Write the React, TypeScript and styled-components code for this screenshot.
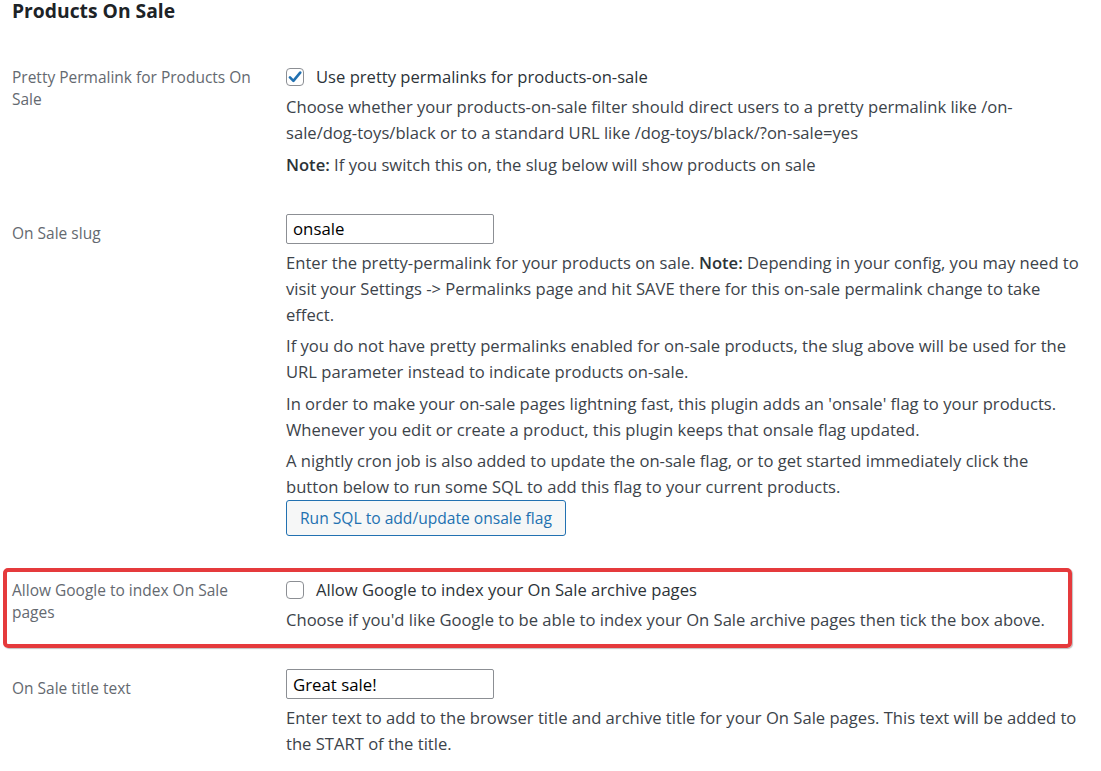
import React from "react";
import styled, { createGlobalStyle } from "styled-components";

const Global = createGlobalStyle`
  html, body { margin: 0; padding: 0; background: #ffffff; }
  body { font-family: "Open Sans", "Noto Sans", Arial, sans-serif; color: #3c434a; }
  * { box-sizing: border-box; }
`;

const Page = styled.div`
  padding: 0 16px 0 12px;
  width: 1101px;
  overflow: hidden;
`;

const Heading = styled.h2`
  margin: 0;
  font-size: 19.3px;
  line-height: 22px;
  font-weight: 700;
  color: #1d2327;
`;

const Row = styled.div<{ $pt: number; $pb: number; $highlight?: boolean; $mt?: number }>`
  display: grid;
  grid-template-columns: 274px 1fr;
  padding-top: ${(p) => p.$pt}px;
  padding-bottom: ${(p) => p.$pb}px;
  margin-top: ${(p) => p.$mt ?? 0}px;
  ${(p) =>
    p.$highlight
      ? `
    border: 4px solid #e53a3c;
    border-radius: 5px;
    margin-left: -9px;
    margin-right: 13px;
    padding-left: 5px;
    box-shadow: 1px 1px 1px rgba(0,0,0,0.25);
  `
      : ""}
`;

const Label = styled.div<{ $pt: number }>`
  padding-top: ${(p) => p.$pt}px;
  font-size: 15.5px;
  line-height: 22px;
  color: #646970;
  padding-right: 16px;
`;

const Field = styled.div`
  display: flex;
  flex-direction: column;
  align-items: flex-start;
`;

const CheckLine = styled.label`
  display: flex;
  align-items: center;
  gap: 12px;
  font-size: 16.6px;
  line-height: 26px;
  color: #2c3338;
`;

const Box = styled.span`
  width: 18px;
  height: 18px;
  border: 1px solid #8c8f94;
  border-radius: 4px;
  background: #fff;
  display: inline-flex;
  align-items: center;
  justify-content: center;
  flex: none;
`;

const Desc = styled.p<{ $mt?: number }>`
  margin: ${(p) => p.$mt ?? 5.5}px 0 0 0;
  font-size: 16.6px;
  line-height: 26px;
  color: #3c434a;
  white-space: nowrap;
  strong { font-weight: 600; color: #2c3338; }
`;

const TextInput = styled.div`
  width: 208px;
  height: 30px;
  border: 1px solid #8c8f94;
  border-radius: 2px;
  padding: 0 6px;
  display: flex;
  align-items: center;
  font-size: 16.8px;
  color: #000;
`;

const Button = styled.button`
  margin-top: 0;
  height: 36px;
  padding: 0 13px;
  border: 1px solid #2271b1;
  border-radius: 3px;
  background: #f6f7f7;
  color: #2271b1;
  font-family: inherit;
  font-size: 15.6px;
  line-height: 34px;
  cursor: pointer;
`;

const Check = () => (
  <svg width="14" height="14" viewBox="0 0 14 14">
    <path d="M2 7.4 L5.4 10.8 L12.2 2.6" fill="none" stroke="#2271b1" strokeWidth="2.6" strokeLinecap="round" strokeLinejoin="round" />
  </svg>
);

export default function App() {
  return (
    <>
      <Global />
      <Page>
        <Heading>Products On Sale</Heading>

        <Row $pt={42} $pb={17.5}>
          <Label $pt={2}>
            Pretty Permalink for Products On
            <br />
            Sale
          </Label>
          <Field>
            <CheckLine>
              <Box>
                <Check />
              </Box>
              Use pretty permalinks for products-on-sale
            </CheckLine>
            <Desc $mt={4}>
              Choose whether your products-on-sale filter should direct users to a pretty permalink like /on-
              <br />
              sale/dog-toys/black or to a standard URL like /dog-toys/black/?on-sale=yes
            </Desc>
            <Desc $mt={6}>
              <strong>Note:</strong> If you switch this on, the slug below will show products on sale
            </Desc>
          </Field>
        </Row>

        <Row $pt={18} $pb={18}>
          <Label $pt={8}>On Sale slug</Label>
          <Field>
            <TextInput>onsale</TextInput>
            <Desc $mt={6}>
              Enter the pretty-permalink for your products on sale. <strong>Note:</strong> Depending in your config, you may need to
              <br />
              visit your Settings -&gt; Permalinks page and hit SAVE there for this on-sale permalink change to take
              <br />
              effect.
            </Desc>
            <Desc>
              If you do not have pretty permalinks enabled for on-sale products, the slug above will be used for the
              <br />
              URL parameter instead to indicate products on-sale.
            </Desc>
            <Desc>
              In order to make your on-sale pages lightning fast, this plugin adds an 'onsale' flag to your products.
              <br />
              Whenever you edit or create a product, this plugin keeps that onsale flag updated.
            </Desc>
            <Desc>
              A nightly cron job is also added to update the on-sale flag, or to get started immediately click the
              <br />
              button below to run some SQL to add this flag to your current products.
            </Desc>
            <Button>Run SQL to add/update onsale flag</Button>
          </Field>
        </Row>

        <Row $highlight $pt={5} $pb={11} $mt={14}>
          <Label $pt={2}>
            Allow Google to index On Sale
            <br />
            pages
          </Label>
          <Field>
            <CheckLine>
              <Box />
              Allow Google to index your On Sale archive pages
            </CheckLine>
            <Desc $mt={4}>
              Choose if you'd like Google to be able to index your On Sale archive pages then tick the box above.
            </Desc>
          </Field>
        </Row>

        <Row $pt={21} $pb={20}>
          <Label $pt={8}>On Sale title text</Label>
          <Field>
            <TextInput>Great sale!</TextInput>
            <Desc $mt={6}>
              Enter text to add to the browser title and archive title for your On Sale pages. This text will be added to
              <br />
              the START of the title.
            </Desc>
          </Field>
        </Row>
      </Page>
    </>
  );
}
